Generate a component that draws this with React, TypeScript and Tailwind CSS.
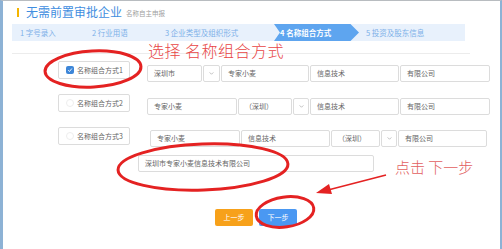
import React from "react";

function Field({ w, text, ml = 0 }: { w: number; text: string; ml?: number }) {
  return (
    <div
      className="flex h-[17px] shrink-0 items-center rounded-[2px] border border-[#dcdcdc] bg-white px-[6px] text-[7px] leading-none text-[#666]"
      style={{ width: w, marginLeft: ml }}
    >
      {text}
    </div>
  );
}

function Drop({ w }: { w: number }) {
  return (
    <div
      className="flex h-[17px] shrink-0 items-center justify-center rounded-[2px] border border-[#dcdcdc] bg-white"
      style={{ width: w }}
    >
      <svg viewBox="0 0 6 4" className="h-[3px] w-[5px]" fill="none">
        <path d="M0.5 0.5L3 3L5.5 0.5" stroke="#999" strokeWidth="0.8" />
      </svg>
    </div>
  );
}

function Option({ label, checked }: { label: string; checked?: boolean }) {
  return (
    <div className="flex h-[18px] w-[72px] shrink-0 items-center gap-[3px] rounded-[2px] border border-[#dcdcdc] bg-white pl-[7px] text-[7px] leading-none text-[#666]">
      {checked ? (
        <span className="flex h-[8px] w-[8px] items-center justify-center rounded-[2px] bg-[#3d86d8]">
          <svg viewBox="0 0 8 8" className="h-[6px] w-[6px]" fill="none">
            <path d="M1.5 4.2L3.3 6L6.5 2" stroke="#fff" strokeWidth="1.2" />
          </svg>
        </span>
      ) : (
        <span className="h-[8px] w-[8px] rounded-full border border-[#eee]" />
      )}
      <span>{label}</span>
    </div>
  );
}

export default function App() {
  return (
    <div className="relative h-[249px] w-[502px] overflow-hidden border-t border-l-[3px] border-r-[2px] border-t-[#b8bcc0] border-l-[#8db2d5] border-r-[#8db2d5] bg-white font-['Noto_Sans_CJK_SC',sans-serif]">
      <div className="flex flex-col">
        {/* title */}
        <div className="mt-[5px] flex h-[12px] items-center pl-[14px]">
          <span className="h-[9px] w-[2px] bg-[#f4b400]" />
          <span className="ml-[7px] text-[12px] leading-none text-[#3f8ee0]">无需前置审批企业</span>
          <span className="ml-[4px] mt-[3px] text-[6.5px] leading-none text-[#a0a0a0]">名称自主申报</span>
        </div>

        {/* steps */}
        <div className="ml-[9px] mt-[6px] flex h-[17px] w-[453px] items-center bg-[#e8f1fc] pl-[8px] text-[7.5px] leading-none text-[#7cb0e8]">
          <span className="w-[72px]">1 字号录入</span>
          <span className="w-[73px]">2 行业用语</span>
          <span className="w-[109px]">3 企业类型及组织形式</span>
          <span className="flex h-[17px] w-[85px] items-center bg-[#5ea5ef] pl-[6px] font-bold text-white [clip-path:polygon(0_0,90%_0,100%_50%,90%_100%,0_100%,7%_50%)]">
            4 名称组合方式
          </span>
          <span className="pl-[7px]">5 投资及股东信息</span>
        </div>

        <div className="ml-[9px] mt-[12px] h-px w-[458px] bg-[#ececec]" />

        {/* row 1 */}
        <div className="ml-[55px] mt-[7px] flex items-start">
          <Option label="名称组合方式1" checked />
          <div className="ml-[17px] mt-[4px] flex gap-[1px]">
            <Field w={55} text="深圳市" />
            <Drop w={17} />
            <Field w={88} text="专家小麦" />
            <Field w={89} text="信息技术" />
            <Field w={90} text="有限公司" />
          </div>
        </div>

        {/* row 2 */}
        <div className="ml-[55px] mt-[12px] flex items-start">
          <Option label="名称组合方式2" />
          <div className="ml-[17px] mt-[4px] flex gap-[1px]">
            <Field w={90} text="专家小麦" />
            <Field w={54} text="（深圳）" />
            <Drop w={16} />
            <Field w={89} text="信息技术" />
            <Field w={90} text="有限公司" />
          </div>
        </div>

        {/* row 3 */}
        <div className="ml-[55px] mt-[12px] flex items-start">
          <Option label="名称组合方式3" />
          <div className="ml-[20px] mt-[3px] flex gap-[1px]">
            <Field w={90} text="专家小麦" />
            <Field w={89} text="信息技术" />
            <Field w={49} text="（深圳）" />
            <Drop w={16} />
            <Field w={89} text="有限公司" />
          </div>
        </div>

        {/* result */}
        <div className="ml-[135px] mt-[8px] flex">
          <Field w={236} text="深圳市专家小麦信息技术有限公司" />
        </div>

        {/* buttons */}
        <div className="ml-[212px] mt-[37px] flex gap-[6px]">
          <button type="button" className="h-[17px] w-[38px] rounded-[2px] bg-[#f7a11a] text-[7px] leading-none text-white">
            上一步
          </button>
          <button type="button" className="h-[17px] w-[38px] rounded-[2px] bg-[#4a98f2] text-[7px] leading-none text-white">
            下一步
          </button>
        </div>
      </div>

      {/* annotations */}
      <span className="absolute left-[145px] top-[41px] text-[16px] font-light leading-none tracking-[0.5px] text-[#e84545]">
        选择 名称组合方式
      </span>
      <span className="absolute left-[392px] top-[158px] text-[15px] font-light leading-none text-[#e26060]">点击 下一步</span>
      <svg className="pointer-events-none absolute left-[-3px] top-[-1px]" width="502" height="249" viewBox="0 0 502 249" fill="none">
        <ellipse cx="93" cy="69" rx="48" ry="18" stroke="#e42222" strokeWidth="3" transform="rotate(-3 93 69)" />
        <ellipse cx="203" cy="167" rx="85" ry="23" stroke="#e42222" strokeWidth="3" transform="rotate(-2 203 167)" />
        <ellipse cx="285" cy="212" rx="29" ry="15" stroke="#e42222" strokeWidth="3" transform="rotate(-8 285 212)" />
        <path d="M386 175L328 190" stroke="#e42222" strokeWidth="1.6" />
        <path d="M316 193L329 184L332 194Z" fill="#e42222" />
      </svg>
    </div>
  );
}
